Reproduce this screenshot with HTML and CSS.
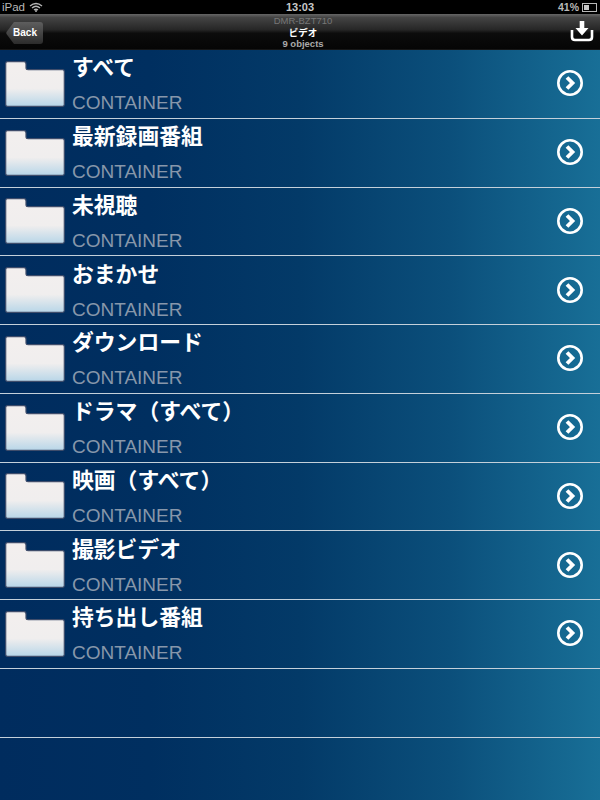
FILE: index.html
```html
<!DOCTYPE html>
<html lang="ja">
  <head>
    <meta charset="UTF-8" />
    <title>DMR-BZT710</title>
    <link rel="stylesheet" href="styles.css">
  </head>
  <body>
    <svg class="defs" width="0" height="0">
      <defs>
        <linearGradient id="folderFill" x1="0" y1="0" x2="0" y2="1">
          <stop offset="0" stop-color="#f3efee" />
          <stop offset="0.6" stop-color="#f0eeee" />
          <stop offset="1" stop-color="#b8d6e8" />
        </linearGradient>
        <symbol id="folder" viewBox="0 0 60 46">
          <path d="M2.5 0.7H19Q21 0.7 21 3V7.2Q21 8.7 23 8.7H57.5Q59.3 8.7 59.3 10.7V43.5Q59.3 45.3 57.5 45.3H2.5Q0.7 45.3 0.7 43.5V2.5Q0.7 0.7 2.5 0.7Z" fill="url(#folderFill)" stroke="#3f4d6b" stroke-width="1.2" />
        </symbol>
        <symbol id="chevron" viewBox="0 0 28 28">
          <circle cx="14" cy="14" r="11.7" fill="none" stroke="#fff" stroke-width="2.6" />
          <path d="M11 8.5L16.5 14L11 19.5" fill="none" stroke="#fff" stroke-width="3.8" />
        </symbol>
      </defs>
    </svg>

    <div class="status">
      <div class="status-left">
        <span>iPad</span>
        <svg class="wifi" width="14" height="10" viewBox="0 0 14 10">
          <path d="M1 4Q7 -1 13 4M3 6Q7 2.6 11 6M5 8Q7 6.6 9 8" fill="none" stroke="#b5b5b5" stroke-width="1.4" />
          <circle cx="7" cy="9" r="1" fill="#b5b5b5" />
        </svg>
      </div>
      <div class="status-time">13:03</div>
      <div class="status-right">
        <span>41%</span>
        <span class="battery"><span class="battery-level"></span></span>
      </div>
    </div>

    <div class="navbar">
      <a class="back">Back</a>
      <div class="nav-title">
        <div class="nav-device">DMR-BZT710</div>
        <div class="nav-name">ビデオ</div>
        <div class="nav-count">9 objects</div>
      </div>
      <svg class="download" width="24" height="22" viewBox="0 0 24 22">
        <path d="M2 10V17Q2 20 5 20H19Q22 20 22 17V10" fill="none" stroke="#fff" stroke-width="2.6" />
        <path d="M9.700 1H14.300V8H18.500L12 15.500L5.500 8H9.700Z" fill="#fff" />
      </svg>
    </div>

    <ul class="list">
      <li class="row">
        <svg class="folder"><use href="#folder" /></svg>
        <div class="row-text"><div class="row-title">すべて</div><div class="row-sub">CONTAINER</div></div>
        <svg class="chevron"><use href="#chevron" /></svg>
      </li>
      <li class="row">
        <svg class="folder"><use href="#folder" /></svg>
        <div class="row-text"><div class="row-title">最新録画番組</div><div class="row-sub">CONTAINER</div></div>
        <svg class="chevron"><use href="#chevron" /></svg>
      </li>
      <li class="row">
        <svg class="folder"><use href="#folder" /></svg>
        <div class="row-text"><div class="row-title">未視聴</div><div class="row-sub">CONTAINER</div></div>
        <svg class="chevron"><use href="#chevron" /></svg>
      </li>
      <li class="row">
        <svg class="folder"><use href="#folder" /></svg>
        <div class="row-text"><div class="row-title">おまかせ</div><div class="row-sub">CONTAINER</div></div>
        <svg class="chevron"><use href="#chevron" /></svg>
      </li>
      <li class="row">
        <svg class="folder"><use href="#folder" /></svg>
        <div class="row-text"><div class="row-title">ダウンロード</div><div class="row-sub">CONTAINER</div></div>
        <svg class="chevron"><use href="#chevron" /></svg>
      </li>
      <li class="row">
        <svg class="folder"><use href="#folder" /></svg>
        <div class="row-text"><div class="row-title">ドラマ（すべて）</div><div class="row-sub">CONTAINER</div></div>
        <svg class="chevron"><use href="#chevron" /></svg>
      </li>
      <li class="row">
        <svg class="folder"><use href="#folder" /></svg>
        <div class="row-text"><div class="row-title">映画（すべて）</div><div class="row-sub">CONTAINER</div></div>
        <svg class="chevron"><use href="#chevron" /></svg>
      </li>
      <li class="row">
        <svg class="folder"><use href="#folder" /></svg>
        <div class="row-text"><div class="row-title">撮影ビデオ</div><div class="row-sub">CONTAINER</div></div>
        <svg class="chevron"><use href="#chevron" /></svg>
      </li>
      <li class="row">
        <svg class="folder"><use href="#folder" /></svg>
        <div class="row-text"><div class="row-title">持ち出し番組</div><div class="row-sub">CONTAINER</div></div>
        <svg class="chevron"><use href="#chevron" /></svg>
      </li>
      <li class="row"></li>
    </ul>
  </body>
</html>
```

FILE: styles.css
```css
html,
body {
  margin: 0;
  height: 800px;
  overflow: hidden;
}

body {
  font-family: "Liberation Sans", "Noto Sans CJK JP", sans-serif;
  background: linear-gradient(90deg, #002c5e 0%, #002f60 25%, #033a68 50%, #0b4f7b 75%, #186f97 100%);
}

.defs {
  display: block;
  height: 0;
}

.status {
  display: grid;
  grid-template-columns: 1fr auto 1fr;
  align-items: center;
  height: 14px;
  padding: 0 2px;
  background: #000;
  color: #b8b8b8;
  font-size: 11.500px;
}

.status-left {
  display: flex;
  align-items: center;
  gap: 4px;
}

.status-time {
  font-weight: bold;
  font-size: 11px;
  color: #c8c8c8;
}

.status-right {
  display: flex;
  align-items: center;
  justify-content: flex-end;
  gap: 3px;
  font-size: 10.500px;
  font-weight: bold;
}

.battery {
  display: block;
  width: 11px;
  height: 5px;
  padding: 1px;
  margin-right: 1px;
  border: 1px solid #b8b8b8;
}

.battery-level {
  display: block;
  width: 5px;
  height: 5px;
  background: #c8c8c8;
}

.navbar {
  display: flex;
  align-items: center;
  justify-content: space-between;
  height: 35px;
  padding: 0 6px;
  border-bottom: 1px solid #161616;
  background: linear-gradient(180deg, #666 0%, #444 10%, #262626 45%, #0c0c0c 55%, #050505 100%);
}

.back {
  width: 37px;
  height: 22px;
  margin-top: 3px;
  padding-left: 1px;
  box-sizing: border-box;
  text-align: center;
  line-height: 22px;
  color: #fff;
  font-size: 10px;
  font-weight: bold;
  clip-path: path("M8 0H34Q37 0 37 3V19Q37 22 34 22H8L0.500 12Q0 11 0.500 10Z");
  background: linear-gradient(180deg, #5e5e5e, #2c2c2c);
}

.nav-title {
  position: absolute;
  left: 6px;
  right: 0;
  text-align: center;
  font-size: 9.500px;
  line-height: 11.500px;
  margin-top: 2px;
  font-weight: bold;
  color: #aaa;
}

.nav-device {
  font-weight: normal;
  color: #777;
}

.nav-name {
  color: #fff;
}

.download {
  position: relative;
  margin-top: -1px;
}

.list {
  list-style: none;
  margin: 0;
  padding: 0;
}

.row {
  display: flex;
  align-items: center;
  box-sizing: border-box;
  height: 68.750px;
  padding: 0 16px 0 5px;
  border-bottom: 1px solid #c4d0da;
}

.folder {
  flex: none;
  width: 60px;
  height: 46px;
}

.row-text {
  flex: 1;
  margin-left: 7px;
  margin-top: -4px;
}

.row-title {
  height: 36px;
  line-height: 36px;
  font-size: 21.800px;
  font-weight: bold;
  color: #fff;
}

.row-sub {
  margin: 6px 0 -1px;
  font-size: 19px;
  line-height: 22px;
  color: #8797aa;
}

.chevron {
  flex: none;
  width: 28px;
  height: 28px;
  margin-top: -1px;
}
```
